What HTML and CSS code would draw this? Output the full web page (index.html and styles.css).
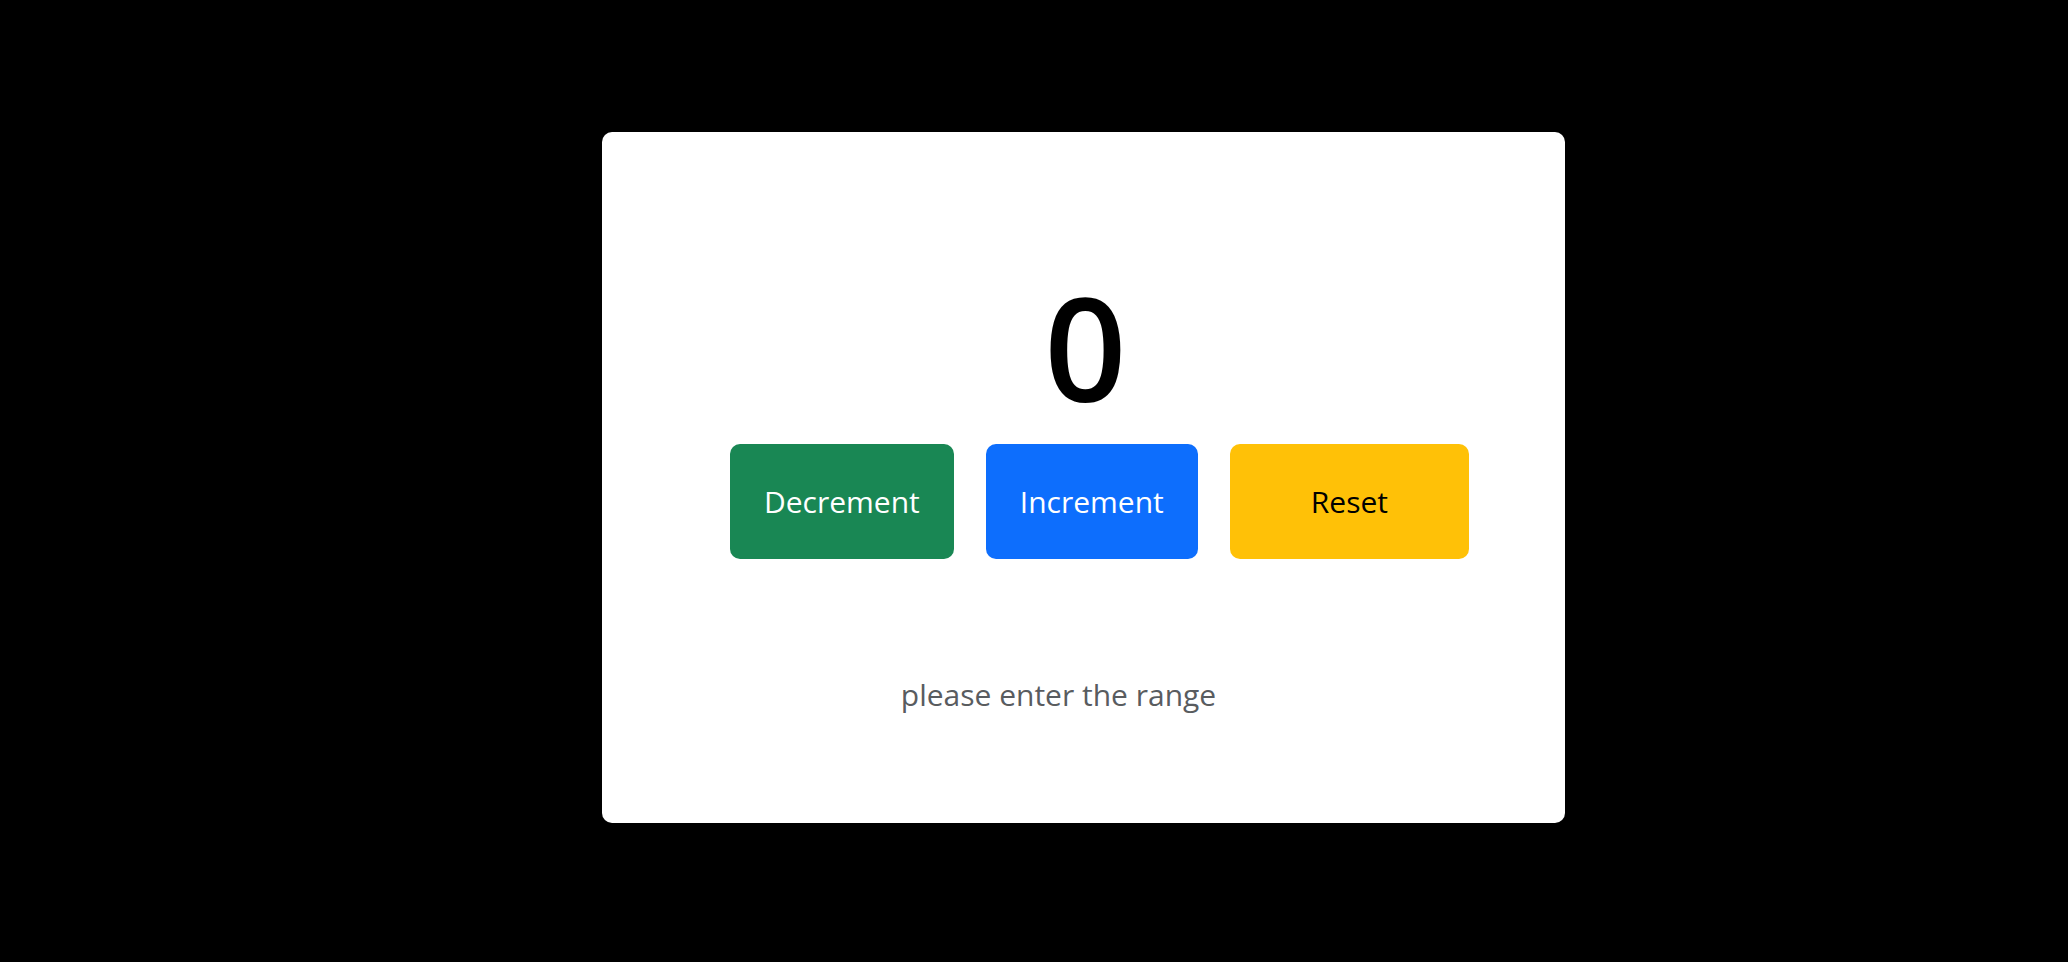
FILE: index.html
```html
<!DOCTYPE html>
<html lang="en">
<head>
<meta charset="utf-8">
<title>Counter</title>
<link rel="stylesheet" href="styles.css">
</head>
<body>
  <div class="page">
    <main class="card">
      <div class="count">0</div>
      <div class="actions">
        <button class="btn btn-green">Decrement</button>
        <button class="btn btn-blue">Increment</button>
        <button class="btn btn-yellow btn-wide">Reset</button>
      </div>
      <p class="hint">please enter the range</p>
    </main>
  </div>
</body>
</html>
```

FILE: styles.css
```css
html, body {
  margin: 0;
  padding: 0;
  background: #000;
  height: 100%;
}

.page {
  box-sizing: border-box;
  height: 100%;
  padding: 132px 0 0 602px;
  font-family: "Open Sans", "Noto Sans", sans-serif;
}

.card {
  box-sizing: border-box;
  width: 963px;
  height: 691px;
  background: #fff;
  border-radius: 10px;
  display: flex;
  flex-direction: column;
  padding-top: 142px;
}

.count {
  font-size: 144px;
  font-weight: 600;
  line-height: 1;
  height: 144px;
  text-align: center;
  color: #000;
  padding-left: 4px;
}

.actions {
  display: flex;
  justify-content: center;
  gap: 32px;
  margin-top: 26px;
  padding-left: 32px;
}

.btn {
  font-family: inherit;
  font-size: 30px;
  height: 115px;
  padding: 0 34px;
  border: none;
  border-radius: 10px;
  display: flex;
  align-items: center;
  justify-content: center;
  cursor: pointer;
}

.btn-wide {
  padding: 0 81px;
}

.btn-green {
  background: #198754;
  color: #fff;
}

.btn-blue {
  background: #0d6efd;
  color: #fff;
}

.btn-yellow {
  background: #ffc107;
  color: #000;
}

.hint {
  margin: 113px 0 0 0;
  padding-right: 50px;
  text-align: center;
  font-size: 30px;
  line-height: 1.5;
  color: #595c5f;
}
```
